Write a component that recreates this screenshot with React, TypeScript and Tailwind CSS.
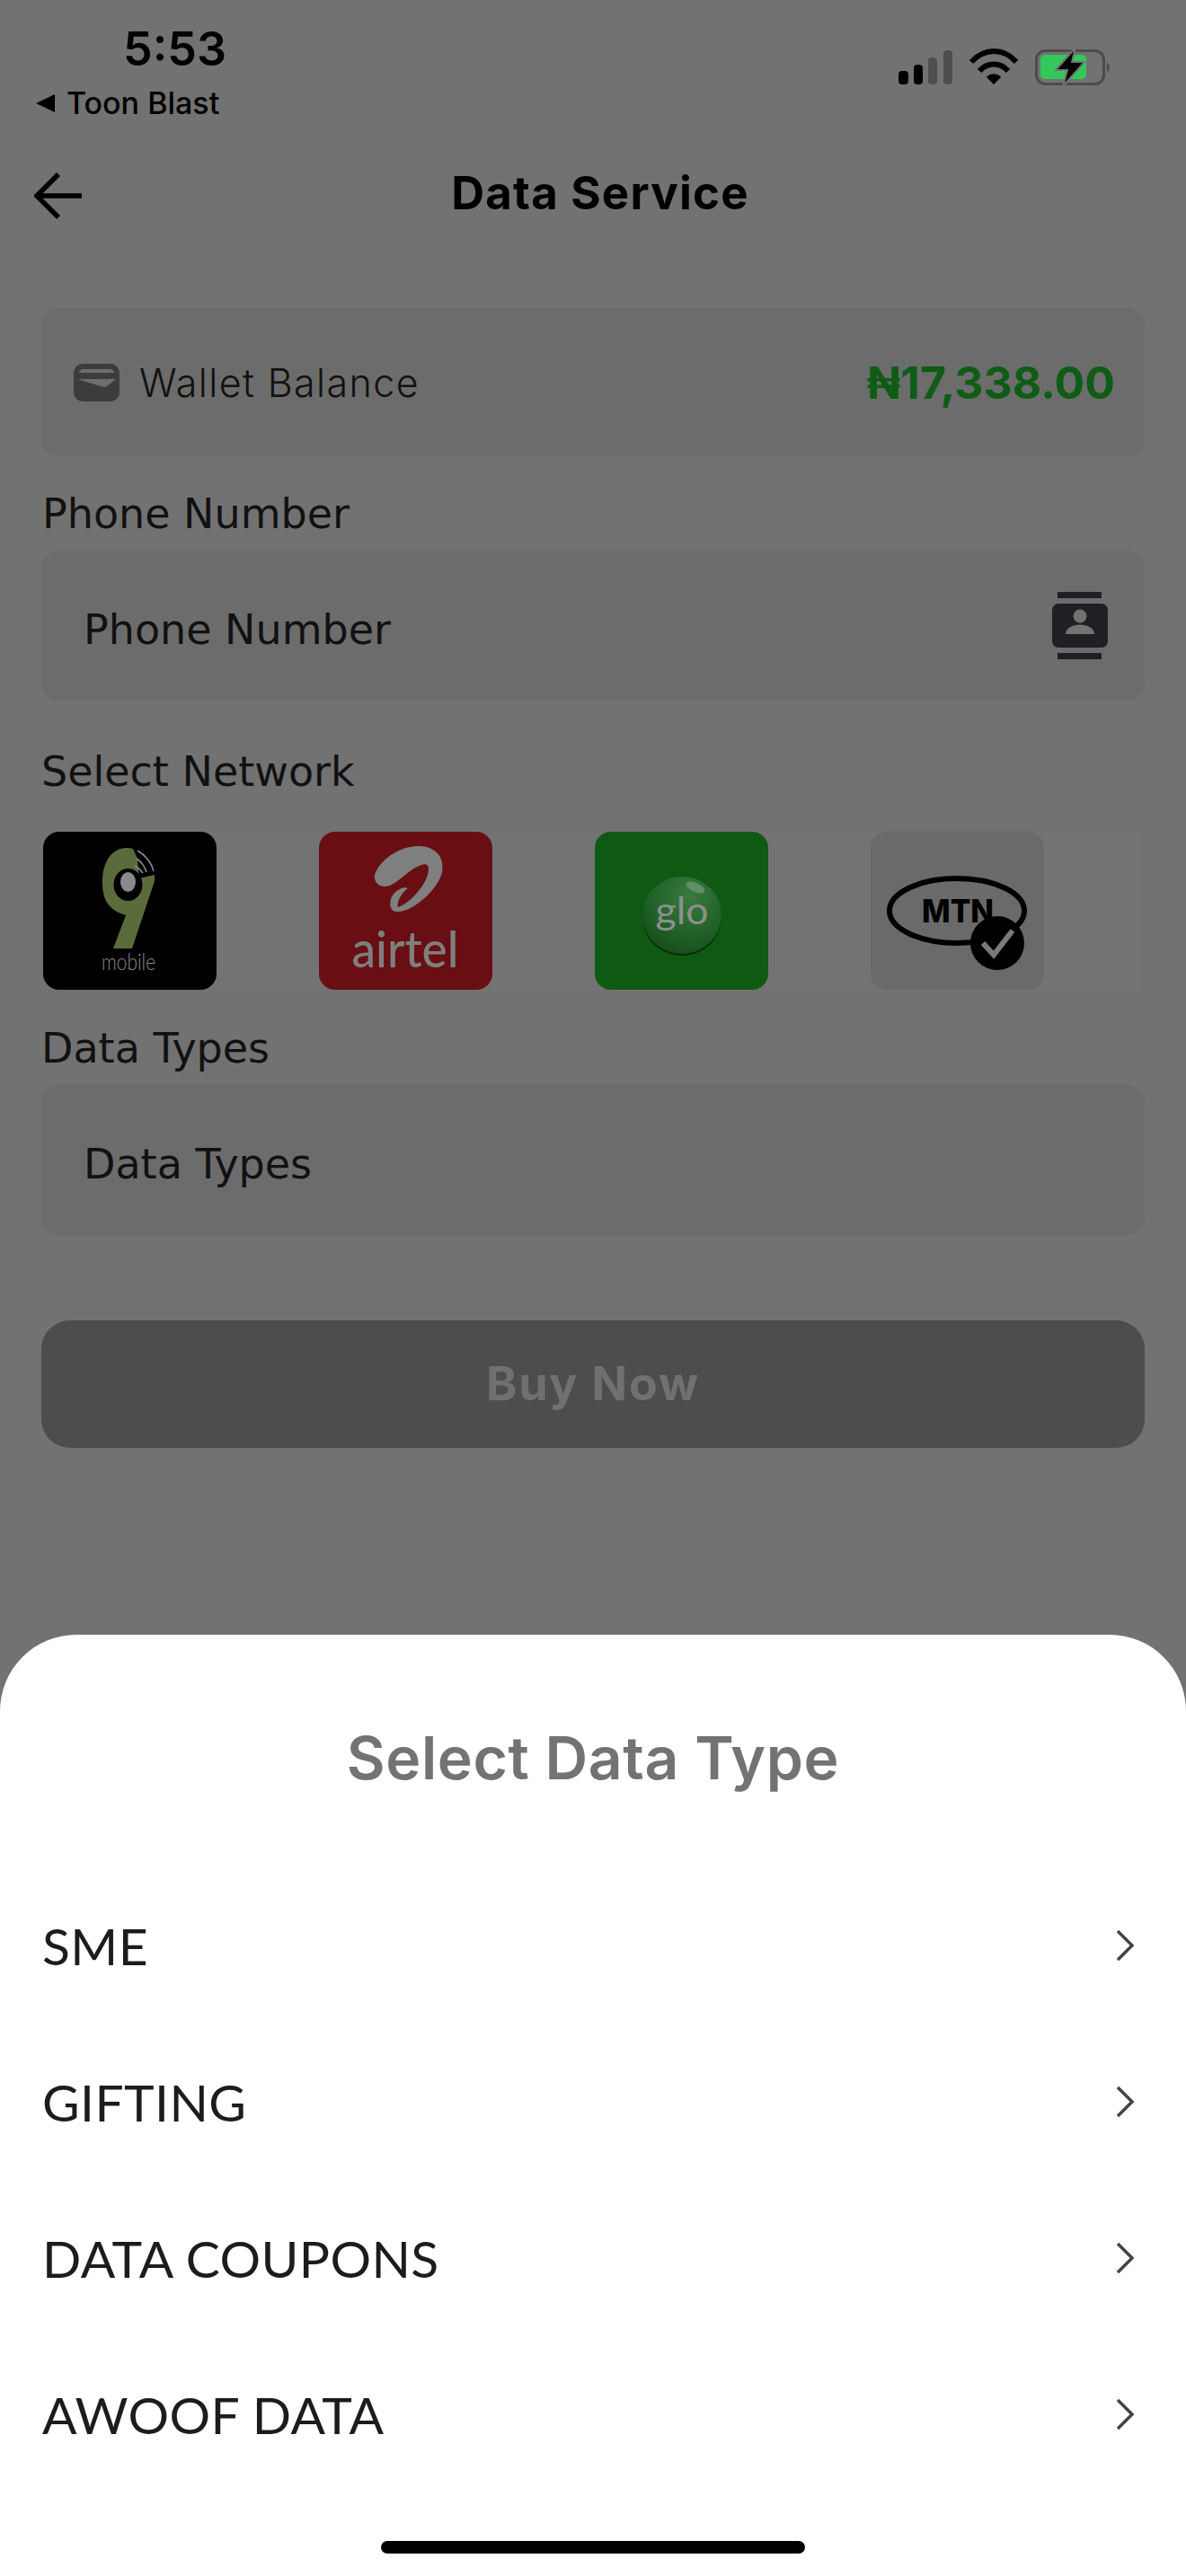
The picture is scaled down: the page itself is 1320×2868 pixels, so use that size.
import React from "react";

const inter = "font-['Inter',sans-serif]";
const dejavu = "font-['DejaVu_Sans',sans-serif]";

function StatusIcons() {
  return (
    <svg width="240" height="50" viewBox="1000 50 240 50">
      <rect x="1000" y="79" width="11" height="15" rx="4" fill="#000" />
      <rect x="1017" y="72" width="10" height="22" rx="4" fill="#000" />
      <rect x="1033" y="64" width="10" height="30" rx="4" fill="#4e4e4e" />
      <rect x="1050" y="56" width="10" height="38" rx="4" fill="#4e4e4e" />
      <path d="M1081 69 C1096 53 1117 53 1131 69" fill="none" stroke="#000" strokeWidth="6" />
      <path d="M1090 79 C1099 69 1113 69 1122 79" fill="none" stroke="#000" strokeWidth="6" />
      <path d="M1098 86 C1102 81 1110 81 1114 86 L1106 94 Z" fill="#000" />
      <rect x="1153.5" y="56.5" width="75" height="37" rx="10" fill="none" stroke="#4c4c4c" strokeWidth="3" />
      <rect x="1158" y="61" width="51" height="27" rx="5" fill="#34c759" />
      <path d="M1232 70 C1236 71 1236 79 1232 80 Z" fill="#4c4c4c" />
      <path d="M1197 53 L1175 78 L1188 78 L1183 96 L1207 69 L1193 69 Z" fill="#000" stroke="#727272" strokeWidth="2" />
    </svg>
  );
}

function NineMobile() {
  return (
    <svg viewBox="0 0 193 176" className="w-full h-full">
      <path d="M100 19 C80 14 66 30 66 56 C66 75 72 87 92 93 L78 130 L99 130 L124 55 L124 48 L107 52 L105 30 Z" fill="#5a6b3c" />
      <ellipse cx="94.5" cy="59" rx="16" ry="18" fill="#000" />
      <ellipse cx="94.5" cy="56" rx="8.5" ry="11" fill="#8a8a8a" />
      <path d="M105 21 C114 26 121 35 123 44 M104 30 C109 33 113 39 115 45 M102 38 C106 40 109 43 111 46" fill="none" stroke="#8a8a8a" strokeWidth="1.6" />
      <text x="95" y="154" textAnchor="middle" fontFamily="Lato, sans-serif" fontWeight="300" fontSize="26" textLength="60" lengthAdjust="spacingAndGlyphs" fill="#8a8a8a">mobile</text>
    </svg>
  );
}

function Airtel() {
  return (
    <svg viewBox="0 0 193 176" className="w-full h-full">
      <path d="M62 48 C68 30 92 15 112 16 C130 17 140 28 137 45 C134 62 106 89 88 89 C80 90 78 82 80 75 C82 68 92 60 99 63 C92 68 86 78 88 84 C102 80 122 56 122 42 C122 33 114 36 104 42 C92 50 82 62 72 61 C65 60 61 55 62 48 Z" fill="#7f7f7f" />
      <text x="96" y="151" textAnchor="middle" fontFamily="Lato, sans-serif" fontWeight="500" fontSize="56" textLength="119" lengthAdjust="spacingAndGlyphs" fill="#7f7f7f">airtel</text>
    </svg>
  );
}

function Glo() {
  return (
    <svg viewBox="0 0 193 176" className="w-full h-full">
      <defs>
        <radialGradient id="glo" cx="60%" cy="25%" r="85%">
          <stop offset="0" stopColor="#3a7a3e" />
          <stop offset="0.55" stopColor="#22632a" />
          <stop offset="1" stopColor="#134a19" />
        </radialGradient>
      </defs>
      <ellipse cx="97" cy="95" rx="44" ry="43" fill="#0a2a0e" />
      <ellipse cx="97" cy="93" rx="44" ry="43" fill="url(#glo)" />
      <ellipse cx="112" cy="62" rx="11" ry="5" fill="#5f8f62" transform="rotate(25 112 62)" />
      <text x="97" y="103" textAnchor="middle" fontFamily="Lato, sans-serif" fontSize="42" textLength="59" lengthAdjust="spacingAndGlyphs" fill="#8f8f8f">glo</text>
    </svg>
  );
}

function Mtn() {
  return (
    <svg viewBox="0 0 193 176" className="w-full h-full">
      <ellipse cx="96" cy="88" rx="75" ry="36" fill="none" stroke="#000" strokeWidth="6" />
      <text x="97" y="101" textAnchor="middle" fontFamily="Inter, sans-serif" fontWeight="800" fontSize="36" textLength="80" lengthAdjust="spacingAndGlyphs" fill="#000">MTN</text>
      <circle cx="141" cy="124" r="30" fill="#000" />
      <path d="M125 124 L137 137 L158 110" fill="none" stroke="#7a7a7a" strokeWidth="6" />
    </svg>
  );
}

function Label({ children, className }: { children: React.ReactNode; className: string }) {
  return (
    <div className={`h-10 flex items-center pt-[3px] text-[46px] leading-10 text-[#111111] ${dejavu} ${className}`}>
      {children}
    </div>
  );
}

function Chevron() {
  return (
    <svg width="20" height="36" viewBox="0 0 20 36" fill="none">
      <path d="M2 2 L18 18 L2 34" stroke="#444444" strokeWidth="3.5" />
    </svg>
  );
}

const items = ["SME", "GIFTING", "DATA COUPONS", "AWOOF DATA"];
const tiles = [
  { bg: "bg-black", el: <NineMobile /> },
  { bg: "bg-[#690f14]", el: <Airtel /> },
  { bg: "bg-[#0f5a12]", el: <Glo /> },
  { bg: "bg-[#6a6a6a]", el: <Mtn /> },
];

export default function App() {
  return (
    <div className="relative h-[2868px] w-[1320px] overflow-hidden bg-[#727272]">
      {/* status bar */}
      <div className="flex h-[185px] justify-between">
        <div className="flex flex-col">
          <div className={`ml-[137px] mt-[26px] h-[58px] text-[52px] leading-[58px] font-semibold text-black ${inter}`}>5:53</div>
          <div className="ml-[38px] mt-[15px] flex h-[32px] items-center gap-[12px]">
            <svg width="24" height="24" viewBox="0 0 24 24"><path d="M23 2 V22 L2 12 Z" fill="#000" /></svg>
            <span className={`text-[34px] leading-8 font-medium text-black ${inter}`}>Toon Blast</span>
          </div>
        </div>
        <div className="mr-[80px] mt-[50px]">
          <StatusIcons />
        </div>
      </div>

      {/* header */}
      <div className="relative flex h-[60px] items-center justify-center">
        <svg className="absolute left-[38px] top-[7px]" width="54" height="52" viewBox="0 0 54 52" fill="none">
          <path d="M27 2 L3 26 L27 50 M3 26 H53" stroke="#000" strokeWidth="5.5" />
        </svg>
        <span className={`ml-[16px] text-[51px] leading-[60px] font-bold tracking-[1.2px] text-black ${inter}`}>Data Service</span>
      </div>

      <div className="px-[46px]">
        {/* wallet */}
        <div className="mt-[98px] flex h-[165px] items-center justify-between rounded-[20px] bg-[#6c6c6c] pl-[36px] pr-[33px]">
          <div className="flex items-center gap-[22px]">
            <svg width="51" height="42" viewBox="0 0 51 42">
              <rect width="51" height="42" rx="10" fill="#3c3c3c" />
              <path d="M6 10 C6 7 9 6 11 6 H40 C43 6 45 8 45 10 Z" fill="#6e6e6e" />
              <path d="M4 17 H47 L36 26 L30 25 Z" fill="#6e6e6e" />
            </svg>
            <span className={`text-[43px] leading-10 font-light tracking-[1.4px] text-[#111111] ${inter}`}>Wallet Balance</span>
          </div>
          <span className={`text-[50px] leading-[50px] font-bold text-[#0f5c16] ${inter}`}>₦17,338.00</span>
        </div>

        <Label className="mt-[42px] mb-[23px] pl-[1px]">Phone Number</Label>
        <div className="flex h-[167px] items-center justify-between rounded-[20px] bg-[#6c6c6c] pl-[47px] pr-[41px]">
          <span className={`pt-[8px] text-[46px] leading-10 text-[#111111] ${dejavu}`}>Phone Number</span>
          <svg width="62" height="75" viewBox="0 0 62 75">
            <rect x="6" width="49" height="7" fill="#1f2023" />
            <rect y="13" width="62" height="49" rx="7" fill="#1f2023" />
            <rect x="6" y="68" width="49" height="7" fill="#1f2023" />
            <circle cx="31" cy="27" r="7.5" fill="#727272" />
            <path d="M15 47 C15 33 47 33 47 47 Z" fill="#727272" />
          </svg>
        </div>

        <Label className="mt-[57px] mb-[49px]">Select Network</Label>
        <div className="mr-[4px] flex h-[177px] gap-[114px] bg-[#737373] pl-[2px] pr-[4px]">
          {tiles.map((t, i) => (
            <div key={i} className={`h-[176px] w-[193px] overflow-hidden rounded-[18px] ${t.bg}`}>
              {t.el}
            </div>
          ))}
        </div>

        <Label className="mt-[42px] mb-[23px]">Data Types</Label>
        <div className="flex h-[167px] items-center rounded-[20px] bg-[#6c6c6c] pl-[47px]">
          <span className={`pt-[8px] text-[46px] leading-10 text-[#111111] ${dejavu}`}>Data Types</span>
        </div>

        <div className="mt-[95px] flex h-[142px] items-center justify-center rounded-[32px] bg-[#4d4d4d]">
          <span className={`text-[52px] leading-[50px] font-bold tracking-[1.8px] text-[#707070] ${inter}`}>Buy Now</span>
        </div>
      </div>

      {/* bottom sheet */}
      <div className="absolute inset-x-0 bottom-0 h-[1048px] rounded-t-[85px] bg-white pt-[97px]">
        <div className={`mb-[82px] h-[80px] text-center text-[66px] leading-[80px] font-semibold tracking-[0.6px] text-[#737373] ${inter}`}>Select Data Type</div>
        {items.map((it) => (
          <div key={it} className="flex h-[174px] items-center justify-between pl-[47px] pr-[58px]">
            <span className="font-['Lato',sans-serif] text-[57px] leading-[60px] tracking-[0.4px] text-[#1c1c1e]">{it}</span>
            <Chevron />
          </div>
        ))}
        <div className="mx-auto mt-[54px] h-[14px] w-[472px] rounded-full bg-black" />
      </div>
    </div>
  );
}
